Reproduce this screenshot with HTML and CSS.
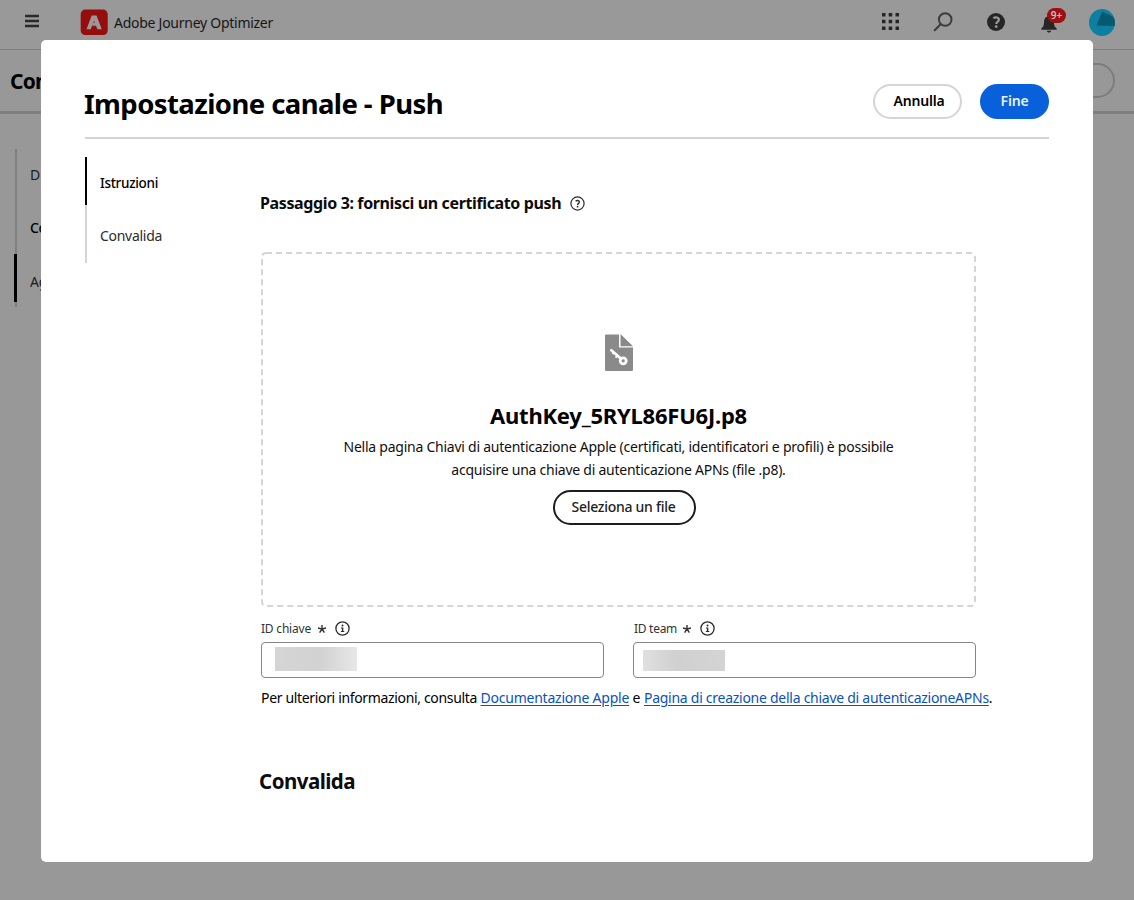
FILE: index.html
```html
<!DOCTYPE html>
<html lang="it">
<head>
<meta charset="utf-8">
<title>Adobe Journey Optimizer</title>
<link rel="stylesheet" href="styles.css">
</head>
<body>
<div class="app">
  <header class="topbar">
    <svg class="menu" width="14" height="12" viewBox="0 0 14 12"><path d="M0 1h14M0 6h14M0 11h14"/></svg>
    <svg class="logo" width="27" height="26" viewBox="0 0 27 26"><rect x="-.3" y=".6" width="27" height="25.400" rx="4.500" fill="#960d0c"/><path fill="#999" d="M10.700 6.400h4.800l5.300 13.800h-4.400l-1.400-3.500h-3.800l1.200-2.900h1.400l-.7-2.100-3.400 8.500H5.500z"/></svg>
    <span class="brand">Adobe Journey Optimizer</span>
    <div class="tools">
      <svg width="17" height="17" viewBox="0 0 17 17" fill="#262626"><path d="M0 0h3.500v3.500H0zM6.700 0h3.500v3.500H6.700zM13.500 0H17v3.500h-3.500zM0 6.700h3.500v3.500H0zM6.700 6.700h3.500v3.500H6.700zM13.500 6.700H17v3.500h-3.500zM0 13.500h3.500V17H0zM6.700 13.500h3.500V17H6.700zM13.500 13.500H17V17h-3.500z"/></svg>
      <svg class="search" width="20" height="20" viewBox="0 0 20 20" fill="none" stroke="#3c3c3c" stroke-width="2" stroke-linecap="round"><circle cx="12.200" cy="7.500" r="6.300"/><path d="M7.600 12.200 1.700 18.200"/></svg>
      <svg class="help" width="18" height="18" viewBox="0 0 18 18"><circle cx="9" cy="9" r="9" fill="#262626"/><path d="M6.300 5.200C8.600 3.700 11.900 4.200 11.900 6.700 11.900 8.800 9.200 8.900 9.200 11" fill="none" stroke="#999" stroke-width="2.200"/><circle cx="9.200" cy="13.600" r="1.450" fill="#999"/></svg>
      <div class="alerts">
        <svg width="16" height="18" viewBox="0 0 16 18" fill="#262626"><path d="M8 0c.9 0 1.500.6 1.500 1.500C12 2.300 13 4.500 13 7c0 4 1 5 2.600 6.400.5.500.3 1.300-.4 1.300H.8c-.7 0-.9-.8-.4-1.300C2 12 3 11 3 7c0-2.500 1-4.700 3.500-5.500C6.500.6 7.100 0 8 0zM5.800 15.800h4.400C10 17 9.100 17.600 8 17.600S6 17 5.800 15.800z"/></svg>
        <span class="badge">9+</span>
      </div>
      <svg class="avatar" width="26" height="27" viewBox="0 0 26 27"><ellipse cx="13" cy="13.500" rx="13" ry="13.500" fill="#0d7fa1"/><path fill="#07596f" d="M13.200 2.600C15.500 4.500 22 6 24.500 8.500c1.500 3 1.800 6 1.100 8.600L7.500 16.600z"/></svg>
    </div>
  </header>
  <div class="pagehead">
    <span class="pagetitle">Con</span>
    <span class="ghost"></span>
  </div>
  <nav class="backnav">
    <span>D</span>
    <span class="strong">Co</span>
    <span class="current">Ag</span>
  </nav>
</div>

<main class="modal">
  <header class="head">
    <h1>Impostazione canale - Push</h1>
    <div class="actions">
      <button class="btn cancel">Annulla</button>
      <button class="btn done">Fine</button>
    </div>
  </header>
  <div class="content">
    <nav class="steps">
      <span class="on">Istruzioni</span>
      <span>Convalida</span>
    </nav>
    <section class="panel">
      <h2>Passaggio 3: fornisci un certificato push
        <svg width="15" height="15" viewBox="0 0 15 15" fill="none" stroke="#2c2c2c"><circle cx="7.500" cy="7.500" r="6.600" stroke-width="1.200"/><path d="M5.600 5.100C7 4 9.300 4.300 9.300 6 9.300 7.400 7.600 7.400 7.600 8.900" stroke-width="1.400"/><circle cx="7.600" cy="10.700" r=".9" fill="#2c2c2c" stroke="none"/></svg>
      </h2>
      <div class="drop">
        <svg class="outline" width="715" height="355"><rect x="1" y="1" width="713" height="353" rx="4" fill="none" stroke="#d5d5d5" stroke-width="2" stroke-dasharray="6 4"/></svg>
        <svg class="doc" width="28" height="37" viewBox="0 0 28 37"><path fill="#8a8a8a" d="M1.300.5H14V13.500H28V35.700Q28 37 26.700 37H1.300Q0 37 0 35.700V1.800Q0 .5 1.300.5z"/><path fill="#8a8a8a" d="M15.500 0 28 12.300H15.500z"/><g fill="none" stroke="#fff"><path d="M6.300 16.300 15.500 24.200" stroke-width="2.800" stroke-linecap="round"/><path d="M8.600 18.300 8 20.300M12.300 21.300l-1.500 2.500" stroke-width="2"/><circle cx="18.200" cy="26.800" r="3" stroke-width="2.800"/></g></svg>
        <h3>AuthKey_5RYL86FU6J.p8</h3>
        <p>Nella pagina Chiavi di autenticazione Apple (certificati, identificatori e profili) è possibile<br>acquisire una chiave di autenticazione APNs (file .p8).</p>
        <button class="btn pick">Seleziona un file</button>
      </div>
      <div class="fields">
        <div class="field">
          <label>ID chiave <svg class="star" width="8" height="8" viewBox="0 0 8 8"><path d="M4 0v4L0 3M4 4l4-1M4 4 1.600 7.600M4 4l2.400 3.600"/></svg><svg width="15" height="15" viewBox="0 0 15 15"><circle cx="7.500" cy="7.500" r="6.600" fill="none" stroke="#2c2c2c" stroke-width="1.300"/><path fill="#2c2c2c" d="M6 6.400h2.300v3.500h1v1.100H5.900V9.900h1V7.500H6z"/><circle cx="7.500" cy="4.500" r="1" fill="#2c2c2c"/></svg></label>
          <div class="input"><span class="mask key"></span></div>
        </div>
        <div class="field">
          <label>ID team <svg class="star" width="8" height="8" viewBox="0 0 8 8"><path d="M4 0v4L0 3M4 4l4-1M4 4 1.600 7.600M4 4l2.400 3.600"/></svg><svg width="15" height="15" viewBox="0 0 15 15"><circle cx="7.500" cy="7.500" r="6.600" fill="none" stroke="#2c2c2c" stroke-width="1.300"/><path fill="#2c2c2c" d="M6 6.400h2.300v3.500h1v1.100H5.900V9.900h1V7.500H6z"/><circle cx="7.500" cy="4.500" r="1" fill="#2c2c2c"/></svg></label>
          <div class="input"><span class="mask team"></span></div>
        </div>
      </div>
      <p class="more"><span class="lead">Per ulteriori informazioni, consulta</span> <a>Documentazione Apple</a> e <a class="wide">Pagina di creazione della chiave di autenticazioneAPNs</a>.</p>
      <h2 class="next">Convalida</h2>
    </section>
  </div>
</main>
</body>
</html>
```
FILE: styles.css
```css
* { box-sizing: border-box; }
body {
  margin: 0;
  width: 1134px;
  height: 900px;
  overflow: hidden;
  position: relative;
  background: #989898;
  color: #000;
  font: 14px/20px "Noto Sans", sans-serif;
}
h1, h2, h3, p { margin: 0; }
svg { display: block; flex: none; overflow: visible; }

.topbar {
  height: 50px;
  padding: 0 19px 5px 25px;
  border-bottom: 1px solid #7d7d7d;
  background: #999;
  display: flex;
  align-items: center;
}
.menu { stroke: #2a2a2a; stroke-width: 2.4; margin: 0 42px 2px 0; }
.logo { margin-right: 6px; }
.brand { color: #161616; letter-spacing: -0.265px; margin-top: 2px; }
.tools { margin-left: auto; display: flex; align-items: center; }
.tools > svg:first-child { margin-top: -2px; }
.search { margin-left: 34px; }
.help { margin-left: 34px; }
.alerts { position: relative; margin: 3px 32px 0 36px; }
.badge {
  position: absolute;
  left: 6px;
  top: -7px;
  width: 19px;
  height: 15px;
  border-radius: 8px;
  background: #9f0f10;
  color: #c4c4c4;
  font-size: 10px;
  font-weight: 600;
  line-height: 15px;
  text-align: center;
}
.pagehead {
  height: 64px;
  border-bottom: 3px solid #7f7f7f;
  padding: 0 19px 0 10px;
  display: flex;
  align-items: center;
  justify-content: space-between;
}
.pagetitle {
  font-size: 21px;
  font-weight: 700;
  letter-spacing: -0.8px;
  line-height: 30px;
}
.ghost {
  width: 90px;
  height: 35px;
  border: 2px solid #7c7c7c;
  border-radius: 18px;
}
.backnav {
  margin: 35px 0 0 14px;
  width: 60px;
  height: 158px;
  display: flex;
  flex-direction: column;
  gap: 5px;
  background: linear-gradient(#7f7f7f, #7f7f7f) 1px 0 / 2px 100% no-repeat;
}
.backnav span {
  height: 48px;
  line-height: 52px;
  padding-left: 13px;
  border-left: 3px solid transparent;
  color: #1b1b1b;
  letter-spacing: -0.3px;
}
.backnav .strong { color: #000; font-weight: 500; }
.backnav .current { border-color: #000; line-height: 56px; margin-top: -1px; }

.modal {
  position: absolute;
  left: 41px;
  top: 40px;
  width: 1052px;
  height: 822px;
  border-radius: 5px;
  background: #fff;
  padding: 0 44px;
}
.head {
  height: 99px;
  padding-top: 25px;
  border-bottom: 2px solid #d3d3d3;
  display: flex;
  align-items: center;
  justify-content: space-between;
}
h1 {
  font-size: 27.5px;
  line-height: 34px;
  font-weight: 700;
  letter-spacing: -0.58px;
  margin: 6px 0 0 -1px;
}
.actions { display: flex; gap: 18px; }
.btn {
  height: 35px;
  padding: 0;
  border-radius: 18px;
  background: #fff;
  font: 600 14px/20px "Noto Sans", sans-serif;
  letter-spacing: -0.19px;
  color: #000;
}
.cancel { width: 89px; border: 2px solid #d5d5d5; padding-left: 3px; }
.done { width: 69px; border: 0; background: #0860db; color: #e8f0fc; }
.content { display: flex; align-items: flex-start; }
.steps {
  width: 174px;
  margin-top: 18px;
  height: 106px;
  display: flex;
  flex-direction: column;
  gap: 5px;
  background: linear-gradient(#d5d5d5, #d5d5d5) 0 0 / 2px 100% no-repeat;
}
.steps span {
  height: 48px;
  line-height: 52px;
  padding-left: 13px;
  border-left: 2px solid transparent;
  color: #2c2c2c;
  letter-spacing: -0.29px;
}
.steps .on {
  border-color: #000;
  color: #000;
  font-size: 13.5px;
  font-weight: 500;
  letter-spacing: -0.31px;
}
.panel { width: 760px; padding: 52px 0 0 2px; }
h2 {
  font-size: 16px;
  line-height: 24px;
  font-weight: 700;
  letter-spacing: -0.37px;
  color: #0c0c0c;
  display: flex;
  align-items: center;
  gap: 9px;
  margin-left: -1px;
}
.drop {
  position: relative;
  width: 715px;
  height: 355px;
  margin-top: 37px;
  display: flex;
  flex-direction: column;
  align-items: center;
}
.outline { position: absolute; left: 0; top: 0; }
.doc { margin-top: 82px; }
h3 {
  font-size: 22px;
  line-height: 30px;
  font-weight: 700;
  letter-spacing: -0.23px;
  margin-top: 29px;
}
.drop p {
  margin-top: 5px;
  line-height: 23px;
  letter-spacing: -0.243px;
  text-align: center;
  color: #0f0f0f;
}
.pick {
  width: 143px;
  border: 2px solid #1d1d1d;
  margin: 9px 0 0 12px;
  font-weight: 500;
  letter-spacing: -0.275px;
  color: #222;
  padding: 0 2px 1px 0;
}
.fields { display: flex; gap: 29px; margin-top: 10px; }
.field { width: 343px; }
label {
  height: 25px;
  padding-bottom: 2px;
  display: flex;
  align-items: center;
  font-size: 12px;
  letter-spacing: -0.2px;
  color: #333;
}
.field + .field label { padding-left: 1px; letter-spacing: -0.28px; }
.star { margin: 0 9px 0 7px; fill: none; stroke: #333; stroke-width: 1.4; }
.field + .field .star { margin: 0 9px 0 6px; }
.input {
  height: 36px;
  border: 1px solid #858585;
  border-radius: 4px;
}
.mask { display: block; width: 82px; }
.key {
  height: 24px;
  margin: 4px 0 0 13px;
  background: linear-gradient(90deg, #d5d5d5, #d2d2d2 55%, #e7e7e7);
}
.team {
  height: 21px;
  margin: 7px 0 0 9px;
  background: linear-gradient(90deg, #e0e0e0, #d0d0d0 40%, #d4d4d4);
}
.more { margin-top: 10px; white-space: nowrap; letter-spacing: -0.1px; }
.lead { letter-spacing: -0.34px; }
.more a {
  color: #0952bd;
  text-decoration: underline;
  text-underline-offset: 2px;
  letter-spacing: -0.23px;
}
.more .wide { letter-spacing: -0.267px; }
.next {
  font-size: 20.5px;
  line-height: 30px;
  letter-spacing: -0.53px;
  margin: 58px 0 0 -2px;
}
```
